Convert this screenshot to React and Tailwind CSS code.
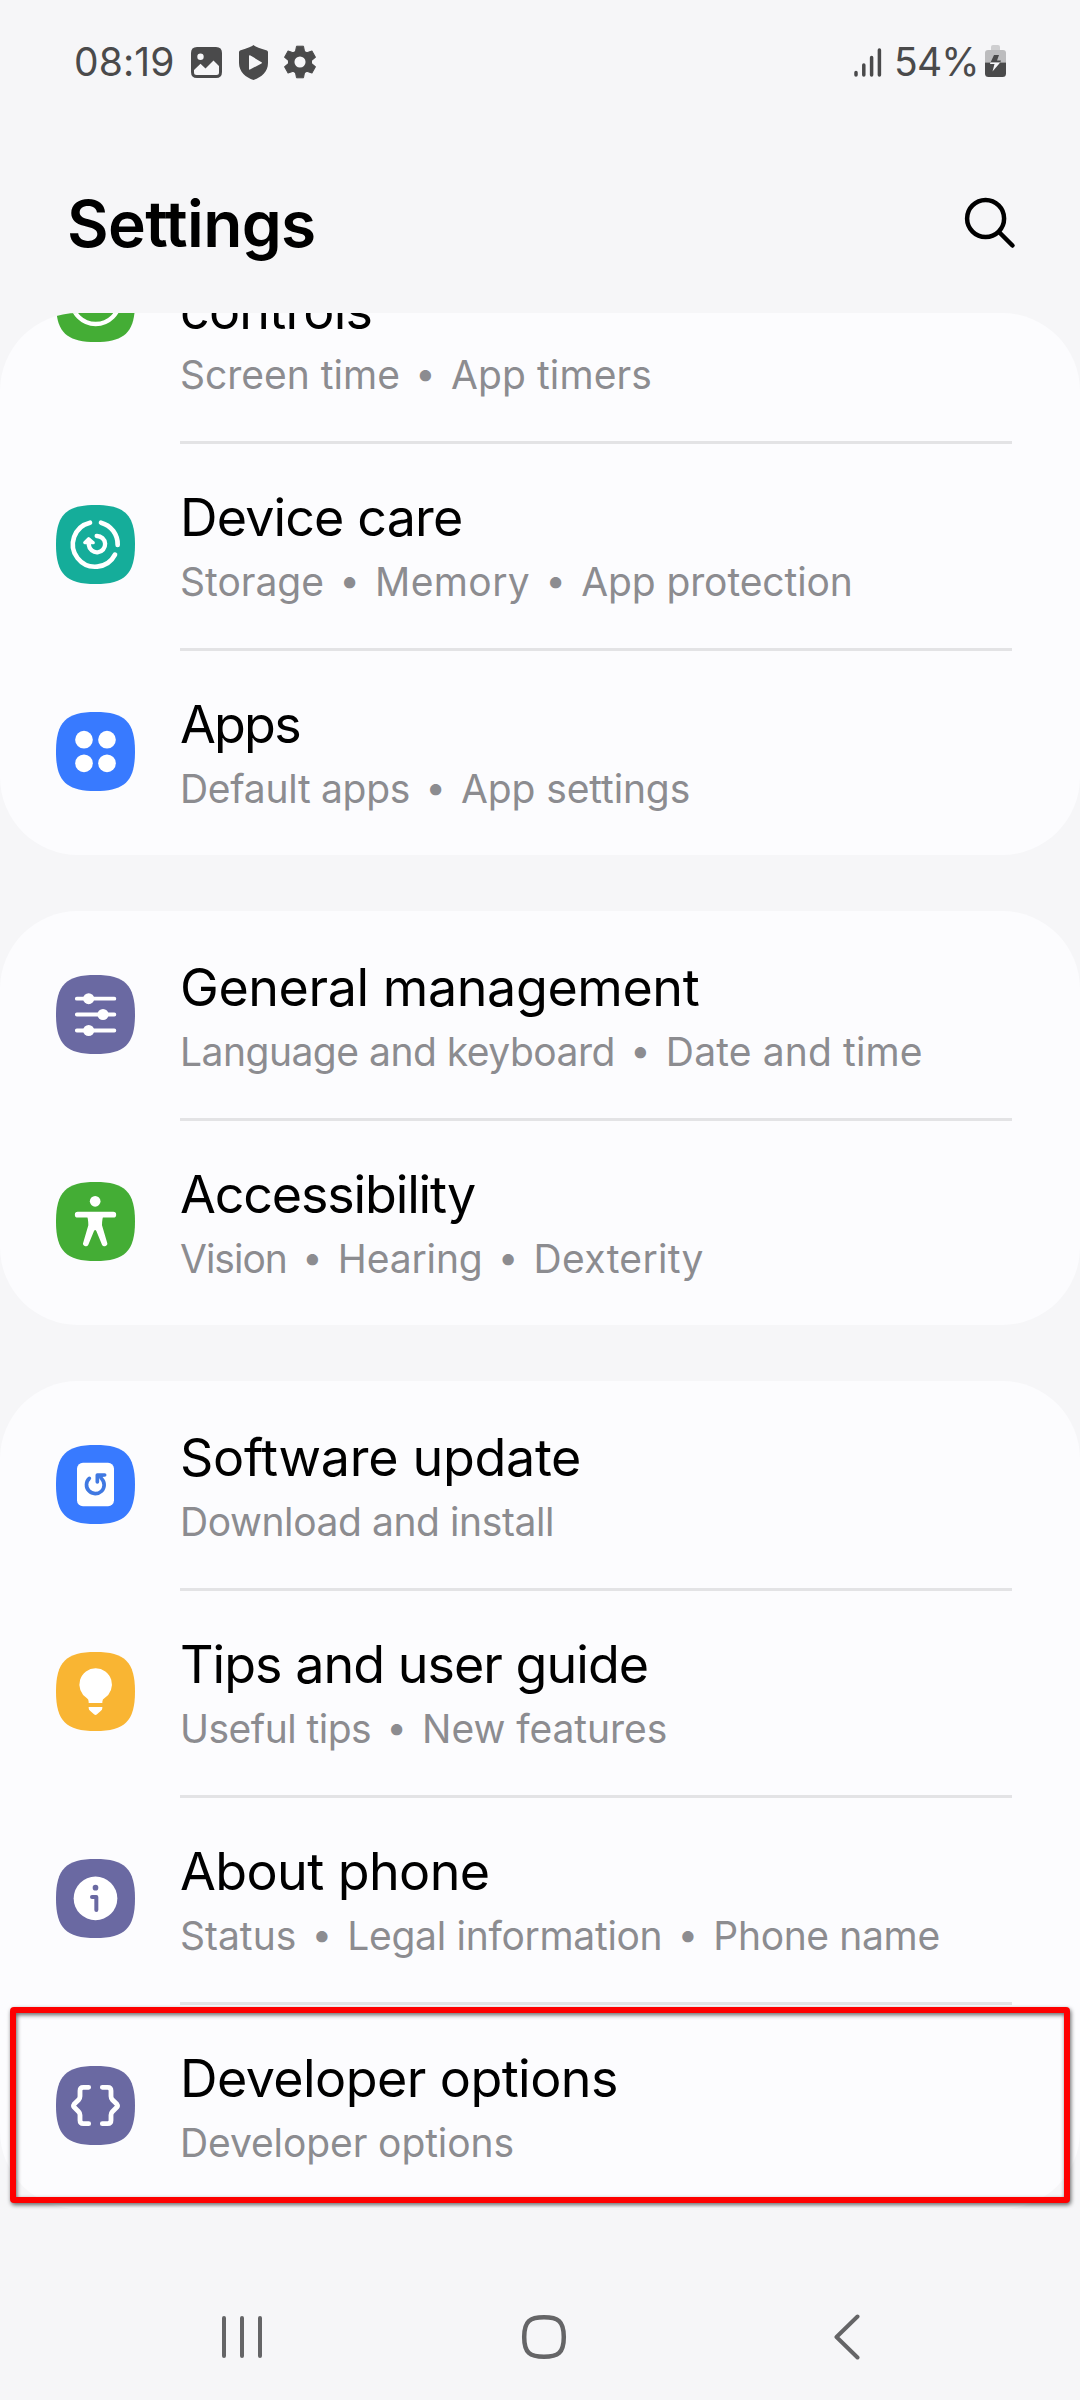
import React from "react";

const SQUIRCLE =
  "M0 118.5C0 30 30 0 118.5 0S237 30 237 118.5 207 237 118.5 237 0 207 0 118.5Z";

function Tile({ color, children }) {
  return (
    <svg viewBox="0 0 237 237" className="block h-[79px] w-[79px] shrink-0" fill="none">
      <path d={SQUIRCLE} fill={color} />
      {children}
    </svg>
  );
}

const BRACE =
  "M98 64H82Q72 64 72 74V91Q72 97 68 101L54 115Q51 119 54 123L68 137Q72 141 72 147V163Q72 173 82 173H98";

const icons = {
  wellbeing: (
    <Tile color="#44ad35">
      <circle cx="119" cy="111" r="72" stroke="#fff" strokeWidth="13" />
    </Tile>
  ),
  care: (
    <Tile color="#15ad9a">
      <g stroke="#fff" strokeLinecap="round">
        <path d="M102 53A67 67 0 1 0 177 149" strokeWidth="14" />
        <path d="M135 53A67 67 0 0 1 185 120" strokeWidth="14" />
        <path d="M122 93A24.500 24.500 0 1 1 98.500 120V106" strokeWidth="13" />
      </g>
      <path d="M98 101L86 113H112Z" fill="#fff" stroke="#fff" strokeWidth="9" strokeLinejoin="round" />
    </Tile>
  ),
  apps: (
    <Tile color="#387aff">
      <g fill="#fff">
        <circle cx="84" cy="83" r="26.500" />
        <circle cx="153" cy="83" r="26.500" />
        <circle cx="84" cy="154" r="26.500" />
        <circle cx="153" cy="154" r="26.500" />
      </g>
    </Tile>
  ),
  general: (
    <Tile color="#6a69a2">
      <path d="M62.500 71H175M62.500 118.500H175M62.500 166.500H175" stroke="#fff" strokeWidth="11.500" strokeLinecap="round" />
      <g fill="#fff">
        <circle cx="98" cy="71" r="16.500" />
        <circle cx="141" cy="118.500" r="16.500" />
        <circle cx="98" cy="166.500" r="16.500" />
      </g>
    </Tile>
  ),
  accessibility: (
    <Tile color="#44ad35">
      <circle cx="117.500" cy="58" r="16" fill="#fff" />
      <path d="M65 98H172" stroke="#fff" strokeWidth="17" strokeLinecap="round" />
      <path
        d="M92 100H143Q138 110 138 130L153 181A8 8 0 0 1 138 188L121 147Q117.500 141 114 147L97 188A8 8 0 0 1 82 181L97 130Q97 110 92 100Z"
        fill="#fff"
      />
    </Tile>
  ),
  update: (
    <Tile color="#387aff">
      <rect x="63" y="53" width="111" height="131" rx="18" fill="#fff" />
      <path d="M100 100A26.500 26.500 0 1 0 137 101" stroke="#4079e2" strokeWidth="11" strokeLinecap="round" />
      <path d="M124 111V90H146" stroke="#4079e2" strokeWidth="11" strokeLinecap="round" strokeLinejoin="round" />
      <path d="M124 88H149L132 104Z" fill="#4079e2" />
    </Tile>
  ),
  tips: (
    <Tile color="#f9b533">
      <path
        d="M119 49A48.500 48.500 0 0 0 92 138Q98 142 98 149V153H139V149Q139 142 146 138A48.500 48.500 0 0 0 119 49Z"
        fill="#fff"
      />
      <path d="M98 165H139V168Q139 174 134 177L123 187Q118.500 191 114 187L103 177Q98 174 98 168Z" fill="#fff" />
    </Tile>
  ),
  about: (
    <Tile color="#6a69a2">
      <circle cx="118.500" cy="118" r="65.500" fill="#fff" />
      <circle cx="118.500" cy="86" r="8.500" fill="#6a69a2" />
      <path d="M108 114H121V153" stroke="#6a69a2" strokeWidth="12" strokeLinecap="round" strokeLinejoin="round" />
    </Tile>
  ),
  developer: (
    <Tile color="#6a69a2">
      <g stroke="#fff" strokeWidth="14.500" strokeLinecap="round" strokeLinejoin="round">
        <path d={BRACE} />
        <path d={BRACE} transform="translate(237 0) scale(-1 1)" />
      </g>
    </Tile>
  ),
};

const groups = [
  [
    {
      icon: "care",
      title: "Device care",
      track: "tracking-[-0.85px]",
      divided: true,
      sub: [
        ["Storage", "tracking-[0px]"],
        ["Memory", "tracking-[0.4px]"],
        ["App protection", "tracking-[-0.1px]"],
      ],
    },
    {
      icon: "apps",
      title: "Apps",
      track: "tracking-[-1.8px]",
      divided: true,
      sub: [
        ["Default apps", "tracking-[-0.3px]"],
        ["App settings", "tracking-[-0.12px]"],
      ],
    },
  ],
  [
    {
      icon: "general",
      title: "General management",
      track: "tracking-[-0.41px]",
      sub: [
        ["Language and keyboard", "tracking-[-0.5px]"],
        ["Date and time", "tracking-[0.14px]"],
      ],
    },
    {
      icon: "accessibility",
      title: "Accessibility",
      track: "tracking-[-1.15px]",
      divided: true,
      sub: [
        ["Vision", "tracking-[-1px]"],
        ["Hearing", "tracking-[-0.13px]"],
        ["Dexterity", "tracking-[0.32px]"],
      ],
    },
  ],
  [
    {
      icon: "update",
      title: "Software update",
      track: "tracking-[-0.3px]",
      sub: [["Download and install", "tracking-[-0.42px]"]],
    },
    {
      icon: "tips",
      title: "Tips and user guide",
      track: "tracking-[-0.97px]",
      divided: true,
      sub: [
        ["Useful tips", "tracking-[-0.53px]"],
        ["New features", "tracking-[-0.05px]"],
      ],
    },
    {
      icon: "about",
      title: "About phone",
      track: "tracking-[-0.6px]",
      divided: true,
      sub: [
        ["Status", "tracking-[0px]"],
        ["Legal information", "tracking-[-0.3px]"],
        ["Phone name", "tracking-[-0.35px]"],
      ],
    },
    {
      icon: "developer",
      title: "Developer options",
      track: "tracking-[-0.57px]",
      divided: true,
      highlighted: true,
      sub: [["Developer options", "tracking-[-0.1px]"]],
    },
  ],
];

function Summary({ parts }) {
  return (
    <div className="mt-[8px] flex h-[52px] items-baseline whitespace-nowrap text-[39px] leading-[52px] text-[#8c8c90]">
      {parts.map(([text, track], i) => (
        <React.Fragment key={text}>
          {i > 0 && <span className="relative top-[-3px] w-[51px] text-center text-[36px]">•</span>}
          <span className={track}>{text}</span>
        </React.Fragment>
      ))}
    </div>
  );
}

function Row({ item }) {
  return (
    <div className="relative flex h-[207px] items-center pl-14 pr-[68px]">
      {icons[item.icon]}
      <div
        className={`ml-[45px] h-full flex-1 border-t-[3px] pt-[44px] ${
          item.divided ? "border-[#e3e3e5]" : "border-transparent"
        }`}
      >
        <div className={`whitespace-nowrap text-[52px] leading-[60px] text-black ${item.track}`}>
          {item.title}
        </div>
        <Summary parts={item.sub} />
      </div>
      {item.highlighted && (
        <div className="absolute left-[10px] right-[10px] top-[5px] h-[196px] rounded-[4px] border-[6px] border-[#fe0000] drop-shadow-[1px_2px_2px_rgba(0,0,0,0.6)]" />
      )}
    </div>
  );
}

function StatusBar() {
  return (
    <div className="flex h-[122px] justify-between pl-[74px] pr-[73px] pt-[36px] text-[39px] leading-[52px] text-[#4a4a4b]">
      <div className="flex">
        <span className="w-[117px] tracking-[0.1px]">08:19</span>
        <svg className="mt-[11px] h-[31px] w-[31px]" viewBox="0 0 31 31">
          <path
            fill="#4a4a4b"
            fillRule="evenodd"
            d="M6 0H25Q31 0 31 6V25Q31 31 25 31H6Q0 31 0 25V6Q0 0 6 0ZM9.500 6.500A3.200 3.200 0 1 0 9.500 12.900A3.200 3.200 0 1 0 9.500 6.500ZM3 23V25.500Q3 28 5.500 28H25.500Q28 28 28 25.500V19L22.500 13.500L14.500 21.500L9.500 16.800Z"
          />
        </svg>
        <svg className="ml-[17px] mt-[9px] h-[35px] w-[29px]" viewBox="0 0 29 35">
          <path
            fill="#4a4a4b"
            fillRule="evenodd"
            d="M14.500 0Q16 1.800 28 5.500Q29 6 29 7.500V18C29 27 22 32.500 14.500 35C7 32.500 0 27 0 18V7.500Q0 6 1 5.500Q13 1.800 14.500 0ZM10 11V24Q10 25 11 24.500L22.500 18.500Q23.500 17.800 22.500 17.200L11.500 10.500Q10 10 10 11Z"
          />
        </svg>
        <svg className="ml-[16px] mt-[9px] h-[34px] w-[32px]" viewBox="0 0 32 34">
          <circle cx="16" cy="17" r="8.800" fill="none" stroke="#4a4a4b" strokeWidth="6.500" />
          <g fill="#4a4a4b">
            {[0, 60, 120, 180, 240, 300].map((a) => (
              <path key={a} d="M12.500 1.200H19.500L20.800 8H11.200Z" stroke="#4a4a4b" strokeLinejoin="round" transform={`rotate(${a} 16 17)`} />
            ))}
          </g>
        </svg>
      </div>
      <div className="flex">
        <svg className="mr-[12px] mt-[10px] h-[32px] w-[28px]" viewBox="0 0 28 32">
          <path
            d="M2 26.500V29M9.800 19V29M17.600 11.500V29M25.400 4V29"
            stroke="#4a4a4b"
            strokeWidth="3.500"
            strokeLinecap="round"
          />
        </svg>
        <span className="w-[91px] whitespace-nowrap tracking-[-0.8px]">54%</span>
        <svg className="mt-[9px] h-[32px] w-[22px]" viewBox="0 0 22 32">
          <path d="M6 5V2Q6 0 8 0H13Q15 0 15 2V5Z" fill="#cfcfd1" />
          <path d="M0 17.500V8Q0 5 3 5H18Q21 5 21 8V17.500Z" fill="#bcbcbe" />
          <path d="M0 17.500H21V28.500Q21 32 17.500 32H3.500Q0 32 0 28.500Z" fill="#4a4a4b" />
          <path d="M9 10H14L12 15.500H16L15.200 17.500H5.500Z" fill="#4a4a4b" />
          <path d="M5.500 17.500H15.200L7.500 26.500L9.500 19H5Z" fill="#f6f6f8" />
        </svg>
      </div>
    </div>
  );
}

export default function App() {
  return (
    <div className="flex h-[2400px] w-[1080px] flex-col overflow-hidden bg-[#f6f6f8] font-['Inter',sans-serif]">
      <StatusBar />
      <header className="flex h-[191px] shrink-0 items-start justify-between pl-[67px] pr-[64px] pt-[62px]">
        <h1 className="text-[64px] font-semibold leading-[80px] tracking-[-0.65px] text-black">Settings</h1>
        <svg className="mt-[12px] h-[54px] w-[54px]" viewBox="0 0 54 54" fill="none" stroke="#000" strokeLinecap="round">
          <circle cx="23.600" cy="22.500" r="18.500" strokeWidth="4.500" />
          <path d="M37 36L50.500 49.500" strokeWidth="4.500" />
        </svg>
      </header>

      <main className="flex flex-col gap-14">
        {groups.map((items, g) => (
          <section
            key={g}
            className={`bg-[#fcfcfe] ${g === 2 ? "rounded-[78px]" : "overflow-hidden rounded-[78px]"}`}
          >
            {g === 0 && (
              <div className="flex h-[128px] items-end overflow-hidden">
                <div className="flex h-[278px] w-full items-center pl-14 pr-[68px]">
                  {icons.wellbeing}
                  <div className="ml-[45px] flex h-full flex-1 flex-col justify-end pb-[40px]">
                    <div className="text-[52px] leading-[60px] tracking-[-0.8px] text-black">controls</div>
                    <Summary
                      parts={[
                        ["Screen time", "tracking-[0px]"],
                        ["App timers", "tracking-[0.1px]"],
                      ]}
                    />
                  </div>
                </div>
              </div>
            )}
            {items.map((item) => (
              <Row key={item.title} item={item} />
            ))}
          </section>
        ))}
      </main>

      <nav className="mt-[105px] flex h-[46px] shrink-0 items-center pl-[221px]">
        <svg className="h-[46px] w-[42px]" viewBox="0 0 42 46" stroke="#656567" strokeWidth="4" strokeLinecap="round">
          <path d="M3 4V42M21 4V42M39 4V42" />
        </svg>
        <svg className="ml-[258px] h-[46px] w-[46px]" viewBox="0 0 46 46" fill="none" stroke="#656567" strokeWidth="4.500">
          <path d="M23 3.200C37 3.200 42.800 7 42.800 23S37 42.800 23 42.800 3.200 39 3.200 23 9 3.200 23 3.200Z" />
        </svg>
        <svg className="ml-[266px] h-[46px] w-[28px]" viewBox="0 0 28 46" fill="none" stroke="#656567" strokeWidth="4" strokeLinecap="round" strokeLinejoin="round">
          <path d="M24.500 2.500L3.500 23L24.500 43.500" />
        </svg>
      </nav>
    </div>
  );
}
